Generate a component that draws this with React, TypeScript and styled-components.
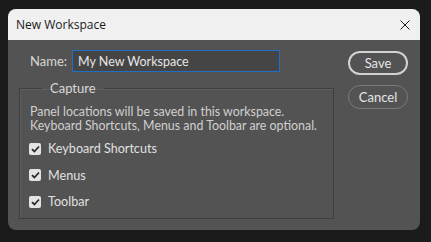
import React from "react";
import styled, { createGlobalStyle } from "styled-components";

const Global = createGlobalStyle`
  html, body { margin: 0; padding: 0; background: #1b1b1b; }
  body { width: 431px; height: 242px; overflow: hidden; }
`;

const Screen = styled.div`
  width: 431px;
  height: 242px;
  padding: 9px 11px 12px 8px;
  box-sizing: border-box;
`;

const Dialog = styled.div`
  width: 412px;
  height: 221px;
  border-radius: 8px;
  overflow: hidden;
  background: #535353;
  display: flex;
  flex-direction: column;
  font-family: "Open Sans", "Noto Sans", sans-serif;
`;

const TitleBar = styled.div`
  height: 31px;
  flex: none;
  background: #f0f0f0;
  display: flex;
  align-items: center;
  justify-content: space-between;
  padding: 0 10px 0 8px;
  font-size: 12px;
  color: #1a1a1a;
`;

const CloseIcon = styled.svg`
  width: 10px;
  height: 10px;
`;

const Body = styled.div`
  flex: 1;
  display: flex;
  padding: 10px 12px 11px 11px;
  gap: 14px;
  color: #d8d8d8;
  font-family: "Lato", "Open Sans", sans-serif;
`;

const LeftCol = styled.div`
  width: 315px;
  display: flex;
  flex-direction: column;
`;

const NameRow = styled.label`
  display: flex;
  align-items: center;
  padding-left: 11px;
  gap: 5px;
  font-size: 13px;
`;

const Input = styled.div`
  width: 208px;
  height: 22px;
  box-sizing: border-box;
  border: 1px solid #1f6fc4;
  background: #454545;
  color: #e6e6e6;
  font-size: 12.5px;
  display: flex;
  align-items: center;
  padding-left: 5px;
`;

const Group = styled.fieldset`
  margin: 10px 0 0 0;
  padding: 0 0 0 10px;
  flex: 1;
  border: 1px solid #3e3e3e;
  box-shadow: inset 1px 1px 0 #5f5f5f;
  display: flex;
  flex-direction: column;
`;

const Legend = styled.legend`
  margin-left: 12px;
  padding: 0 8px;
  font-size: 13px;
  color: #d8d8d8;
  line-height: 12px;
`;

const Desc = styled.p`
  margin: 11px 0 0 0;
  font-size: 12.4px;
  line-height: 14px;
  color: #d0d0d0;
`;

const CheckRow = styled.div<{ first?: boolean }>`
  display: flex;
  align-items: center;
  gap: 7px;
  height: 13px;
  margin-top: ${(p) => (p.first ? "9px" : "13.5px")};
  font-size: 12.6px;
  color: #e0e0e0;
`;

const Box = styled.span`
  width: 12px;
  height: 12px;
  border-radius: 2px;
  background: #e3e3e3;
  display: flex;
  align-items: center;
  justify-content: center;
  margin-left: -1px;
`;

const RightCol = styled.div`
  display: flex;
  flex-direction: column;
  gap: 10px;
  padding-top: 1px;
`;

const Button = styled.button<{ primary?: boolean }>`
  width: 60px;
  height: 24px;
  border-radius: 12px;
  background: transparent;
  box-sizing: border-box;
  border: ${(p) => (p.primary ? "2px solid #d2d2d2" : "1px solid #7a7a7a")};
  color: #e6e6e6;
  font-family: "Lato", "Open Sans", sans-serif;
  font-size: 13px;
  padding: 0;
`;

const Check = () => (
  <Box>
    <svg width="9" height="8" viewBox="0 0 9 8">
      <path d="M1 4.2 L3.4 6.5 L8 1.5" fill="none" stroke="#2a2a2a" strokeWidth="1.8" />
    </svg>
  </Box>
);

export default function App() {
  return (
    <Screen>
      <Global />
      <Dialog>
        <TitleBar>
          <span>New Workspace</span>
          <CloseIcon viewBox="0 0 10 10">
            <path d="M0.5 0.5 L9.5 9.5 M9.5 0.5 L0.5 9.5" stroke="#1a1a1a" strokeWidth="1" />
          </CloseIcon>
        </TitleBar>
        <Body>
          <LeftCol>
            <NameRow>
              Name:
              <Input>My New Workspace</Input>
            </NameRow>
            <Group>
              <Legend>Capture</Legend>
              <Desc>
                Panel locations will be saved in this workspace.
                <br />
                Keyboard Shortcuts, Menus and Toolbar are optional.
              </Desc>
              <CheckRow first>
                <Check />
                Keyboard Shortcuts
              </CheckRow>
              <CheckRow>
                <Check />
                Menus
              </CheckRow>
              <CheckRow>
                <Check />
                Toolbar
              </CheckRow>
            </Group>
          </LeftCol>
          <RightCol>
            <Button primary>Save</Button>
            <Button>Cancel</Button>
          </RightCol>
        </Body>
      </Dialog>
    </Screen>
  );
}
